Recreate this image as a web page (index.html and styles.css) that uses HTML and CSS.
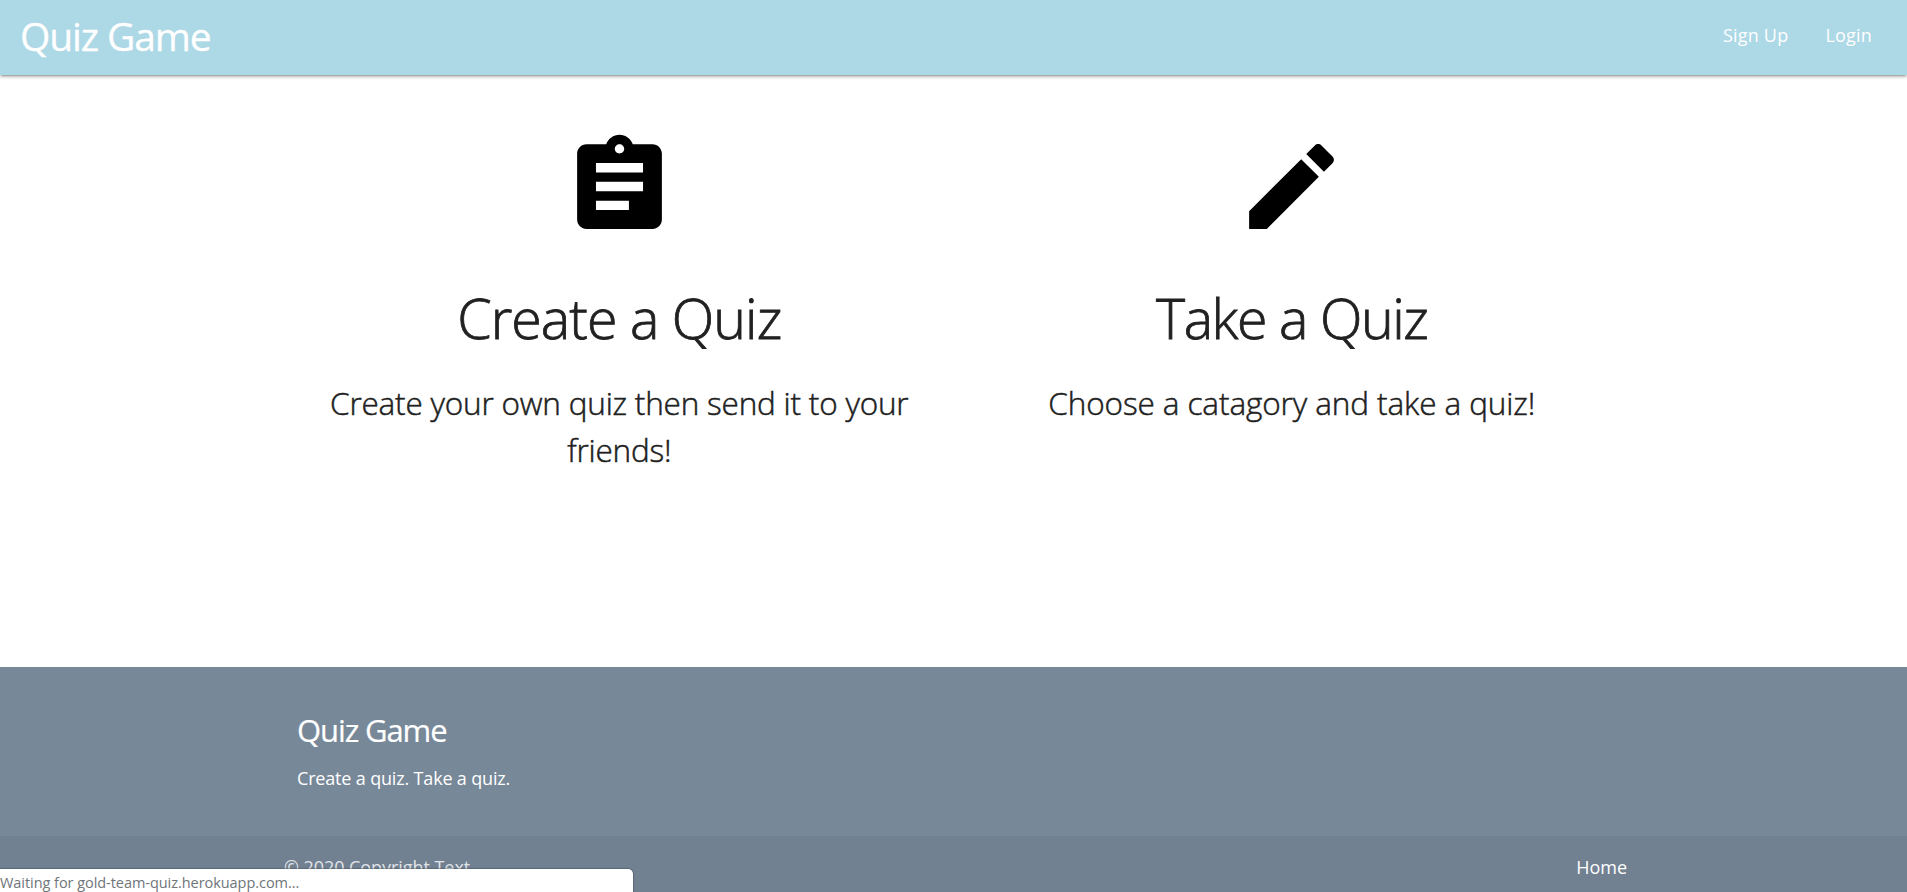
FILE: index.html
```html
<!DOCTYPE html>
<html lang="en">
<head>
<meta charset="utf-8">
<title>Quiz Game</title>
<link rel="stylesheet" href="styles.css">
</head>
<body>
<nav class="navbar">
  <a class="brand">Quiz Game</a>
  <div class="nav-links"><a class="signup">Sign Up</a><a class="login">Login</a></div>
</nav>
<main class="features">
  <section class="feature">
    <svg class="icon" viewBox="0 0 24 24"><path d="M19 3h-4.18C14.4 1.84 13.3 1 12 1c-1.3 0-2.4.84-2.82 2H5c-1.1 0-2 .9-2 2v14c0 1.1.9 2 2 2h14c1.1 0 2-.9 2-2V5c0-1.1-.9-2-2-2zm-7 0c.55 0 1 .45 1 1s-.45 1-1 1-1-.45-1-1 .45-1 1-1zm2 14H7v-2h7v2zm3-4H7v-2h10v2zm0-4H7V7h10v2z"/></svg>
    <h1 class="title">Create a Quiz</h1>
    <p class="text text-create">Create your own quiz then send it to your<br>friends!</p>
  </section>
  <section class="feature">
    <svg class="icon" viewBox="0 0 24 24"><path d="M3 17.25V21h3.75L17.81 9.94l-3.75-3.75L3 17.25zM20.71 7.04c.39-.39.39-1.02 0-1.41l-2.34-2.34c-.39-.39-1.02-.39-1.41 0l-1.83 1.83 3.75 3.75 1.83-1.83z"/></svg>
    <h1 class="title title-take">Take a Quiz</h1>
    <p class="text">Choose a catagory and take a quiz!</p>
  </section>
</main>
<footer class="footer">
  <div class="footer-main">
    <h5 class="footer-title">Quiz Game</h5>
    <p class="footer-text">Create a quiz. Take a quiz.</p>
  </div>
  <div class="copyright"><span class="copy">© 2020 Copyright Text</span><a class="home">Home</a></div>
</footer>
<div class="status">Waiting for gold-team-quiz.herokuapp.com...</div>
</body>
</html>
```
FILE: styles.css
```css
* { box-sizing: border-box; margin: 0; padding: 0; }
body { height: 892px; overflow: hidden; display: flex; flex-direction: column; background: #fff; color: #212121; font-family: "Open Sans", "Noto Sans", sans-serif; font-size: 18px; }
.navbar { flex: none; height: 75px; padding: 0 35px 0 20px; display: flex; justify-content: space-between; background: #add8e6; color: #fff; box-shadow: 0 2px 2px 0 rgba(0,0,0,.14), 0 3px 1px -2px rgba(0,0,0,.12), 0 1px 5px 0 rgba(0,0,0,.2); }
.brand { font-size: 39px; line-height: 72px; letter-spacing: -1.1px; -webkit-text-stroke: .3px; }
.nav-links { display: flex; gap: 37px; line-height: 71px; letter-spacing: .2px; }
.features { flex: none; height: 592px; padding: 55px 0 0 283px; display: flex; }
.feature { width: 672.5px; text-align: center; }
.icon { display: block; width: 113px; height: 113px; margin: 0 auto; }
.title { font-size: 55.5px; line-height: 62px; font-weight: 300; margin-top: 44px; letter-spacing: -.95px; -webkit-text-stroke: .8px; }
.title-take { letter-spacing: -1.45px; }
.text { font-size: 31.5px; line-height: 47px; font-weight: 300; margin-top: 30px; letter-spacing: -.1px; white-space: nowrap; -webkit-text-stroke: .5px; }
.text-create { letter-spacing: -.2px; }
.footer { flex: none; height: 225px; background: #778899; color: #fff; }
.footer-main { height: 169px; padding: 42px 0 0 297px; }
.footer-title { font-size: 31px; line-height: 42px; font-weight: 400; letter-spacing: -1.1px; -webkit-text-stroke: .2px; }
.footer-text { line-height: 27px; margin-top: 14px; letter-spacing: -.17px; }
.copyright { height: 56px; padding: 0 280px 0 284px; display: flex; justify-content: space-between; line-height: 63px; background: rgba(51,51,51,.08); letter-spacing: -.06px; }
.copy { color: rgba(255,255,255,.8); }
.status { position: absolute; left: 0; bottom: 0; width: 633px; height: 23px; background: #fff; border-radius: 0 5px 0 0; color: #70757a; font-size: 14.5px; line-height: 27px; letter-spacing: -.05px; box-shadow: 0 0 1px 1px rgba(60,70,80,.4); }
```
